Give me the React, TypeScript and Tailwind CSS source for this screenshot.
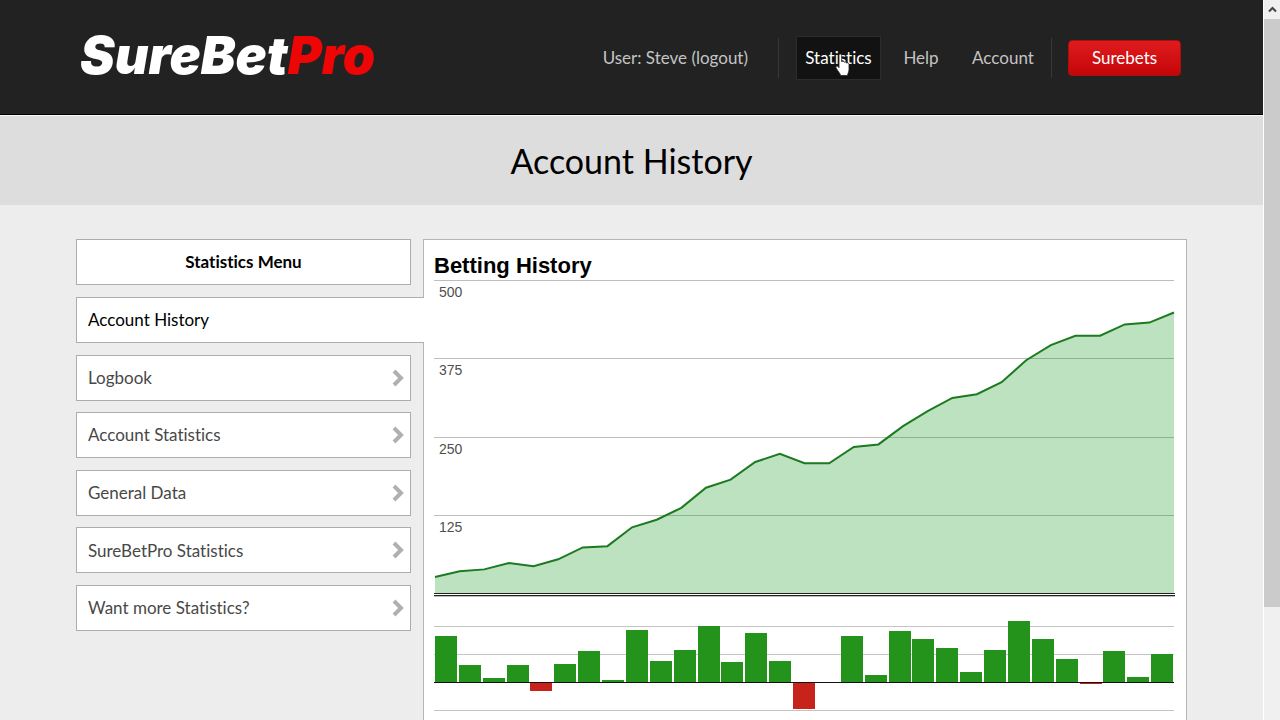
import React from "react";

interface MenuItemProps {
  label: string;
  active?: boolean;
}

const menuItems = [
  { label: "Account History", active: true },
  { label: "Logbook" },
  { label: "Account Statistics" },
  { label: "General Data" },
  { label: "SureBetPro Statistics" },
  { label: "Want more Statistics?" },
];

const balance = [
  28, 37, 40, 50, 45, 56, 75, 77, 107, 119, 138, 170, 183, 211, 224, 209, 209,
  235, 239, 268, 292, 313, 319, 338, 373, 397, 412, 412, 430, 433, 449,
];

const profits = [
  46, 17, 4, 17, -8, 18, 31, 2, 52, 21, 32, 56, 20, 49, 21, -26, 0, 46, 7, 51,
  43, 34, 10, 32, 61, 43, 23, -1, 31, 5, 28,
];

const CHART_WIDTH = 740;
const CHART_BASE = 314;
const BARS_BASE = 402;

const balanceY = (value: number) => CHART_BASE - value * 0.628;

const MenuItem = ({ label, active }: MenuItemProps) => (
  <li className={active ? "relative z-10 -mr-[13px]" : ""}>
    <a
      href="#"
      className={`flex h-[46px] items-center justify-between border border-[#adadad] bg-white pl-[11px] text-[17px] ${
        active ? "border-r-0 text-black" : "pr-1.5 text-[#484848]"
      }`}
    >
      {label}
      {!active && (
        <svg width="12" height="18" viewBox="0 0 12 18" aria-hidden="true">
          <path
            d="M2 2 L9 9 L2 16"
            fill="none"
            stroke="#b0b0b0"
            strokeWidth="4"
          />
        </svg>
      )}
    </a>
  </li>
);

const BalanceChart = () => {
  const step = (CHART_WIDTH - 1) / (balance.length - 1);
  const line = balance
    .map((value, i) => `${1 + i * step},${balanceY(value) + 0.5}`)
    .join(" ");

  return (
    <g>
      {[500, 375, 250, 125].map((value) => (
        <g key={value}>
          <rect
            x="0"
            y={Math.floor(balanceY(value))}
            width={CHART_WIDTH}
            height="1"
            fill="#bdbdbd"
          />
          <text
            x="5"
            y={Math.floor(balanceY(value)) + 17}
            fontSize="14"
            fill="#505050"
          >
            {value}
          </text>
        </g>
      ))}
      <polygon
        points={`1,${CHART_BASE} ${line} ${CHART_WIDTH},${CHART_BASE}`}
        fill="#109618"
        fillOpacity="0.28"
      />
      <polyline points={line} fill="none" stroke="#1c7a20" strokeWidth="2" />
      <rect x="0" y="313" width="741" height="4" fill="#ffffff" />
      <rect x="0" y="313" width="741" height="1" fill="#222222" />
      <rect x="0" y="315" width="741" height="1" fill="#222222" />
      <rect x="0" y="316" width="741" height="1" fill="#bbbbbb" />
    </g>
  );
};

const ProfitBars = () => {
  const step = CHART_WIDTH / profits.length;

  return (
    <g>
      {[346, 374, 430].map((y) => (
        <rect
          key={y}
          x="0"
          y={y}
          width={CHART_WIDTH}
          height="1"
          fill="#c4c4c4"
        />
      ))}
      <rect x="0" y={BARS_BASE} width={CHART_WIDTH} height="1" fill="#111111" />
      {profits.map((value, i) => (
        <rect
          key={i}
          x={Math.round(i * step) + 1}
          y={value > 0 ? BARS_BASE - value : BARS_BASE + 1}
          width="22"
          height={Math.abs(value)}
          fill={value > 0 ? "#24931c" : "#c8231a"}
        />
      ))}
    </g>
  );
};

const Header = () => (
  <header className="border-b border-black bg-[#222222]">
    <div className="mx-auto flex h-[114px] max-w-[1111px] items-center pr-1.5 pt-0.5">
      <a
        href="#"
        className="ml-1 pb-1 font-[Inter,sans-serif] text-[52px] font-black italic leading-none text-white"
      >
        SureBet<span className="text-[#ee0505]">Pro</span>
      </a>
      <nav className="ml-auto flex items-center text-[17px] text-[#c4c4c4]">
        <a href="#" className="mr-[30px]">
          User: Steve (logout)
        </a>
        <span className="mr-[17px] h-10 w-px bg-[#383838]" />
        <a
          href="#"
          className="relative flex h-11 w-[85px] items-center justify-center border border-[#2c2c2c] bg-[#121212] text-white"
        >
          Statistics
          <svg
            className="absolute left-[38px] top-[16px]"
            width="16"
            height="24"
            viewBox="0 0 16 24"
            aria-hidden="true"
          >
            <path
              d="M4 2.2C4 .6 6.6.6 6.6 2.2V8.6C7.4 8 8.8 8.2 9.1 9.2 10 8.6 11.4 9 11.6 10 12.7 9.6 14 10.2 14 11.6V16.5C14 19 12.8 20.2 12.5 22.5H5.6C5.2 20.4 3.2 18.6 1.1 15 .2 13.4 2 12.4 3 13.5L4 14.7Z"
              fill="#ffffff"
              stroke="#222222"
              strokeWidth="0.8"
            />
          </svg>
        </a>
        <a href="#" className="w-20 text-center">
          Help
        </a>
        <a href="#" className="mr-1.5 w-[84px] text-center">
          Account
        </a>
        <span className="mr-4 h-10 w-px bg-[#383838]" />
        <a
          href="#"
          className="flex h-9 w-[113px] items-center justify-center rounded-sm border border-[#a81010] bg-linear-to-b from-[#e01a1c] to-[#c40508] text-white"
        >
          Surebets
        </a>
      </nav>
    </div>
  </header>
);

const Scrollbar = () => (
  <div className="flex w-[17px] flex-col border-l border-white bg-[#f0f0f0]">
    <button
      type="button"
      aria-label="Scroll up"
      className="flex h-[19px] items-center justify-center"
    >
      <svg width="9" height="7" viewBox="0 0 9 7" aria-hidden="true">
        <path d="M1 5.5 L4.5 2 L8 5.5" fill="none" stroke="#444" strokeWidth="2" />
      </svg>
    </button>
    <div className="h-[588px] bg-[#cbcbcb]" />
  </div>
);

const App: React.FC = () => {
  return (
    <div className="flex h-screen overflow-hidden bg-[#ededed] font-[Lato,sans-serif] [font-variant-ligatures:none]">
      <div className="min-w-0 flex-1">
        <Header />
        <div className="flex h-[90px] items-center justify-center border-t border-[#f4f4f4] bg-[#dddddd]">
          <h1 className="text-[34px] text-black">Account History</h1>
        </div>
        <main className="mx-auto flex max-w-[1111px] items-start gap-3 pt-[34px]">
          <aside className="flex h-[392px] w-[335px] shrink-0 flex-col">
            <h2 className="mb-3 flex h-[46px] shrink-0 items-center justify-center border border-[#adadad] bg-white text-[17px] font-bold text-black">
              Statistics Menu
            </h2>
            <ul className="flex flex-1 flex-col justify-between">
              {menuItems.map((item) => (
                <MenuItem key={item.label} {...item} />
              ))}
            </ul>
          </aside>
          <section className="min-w-0 flex-1 border border-[#b5b5b5] bg-white pb-6 pl-[10px] pr-[11px] font-['Liberation_Sans',Arial,sans-serif]">
            <h2 className="h-10 pt-2 text-[22px] font-bold leading-9 text-black">
              Betting History
            </h2>
            <svg
              className="w-full"
              viewBox="0 0 741 450"
              role="img"
              aria-label="Betting history chart"
            >
              <BalanceChart />
              <ProfitBars />
            </svg>
          </section>
        </main>
      </div>
      <Scrollbar />
    </div>
  );
};

export default App;
